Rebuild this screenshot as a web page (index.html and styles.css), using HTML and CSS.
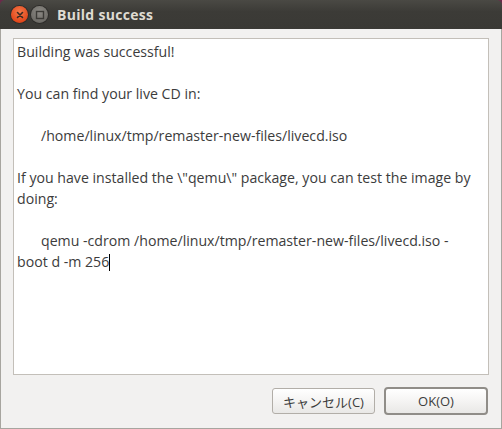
FILE: index.html
```html
<!DOCTYPE html>
<html>
<head>
<meta charset="utf-8">
<link rel="stylesheet" href="styles.css">
</head>
<body>
<div class="window">
  <div class="titlebar">
    <div class="winbtn close">
      <svg width="16" height="16" viewBox="0 0 16 16"><path d="M5.5 5.5 L10.5 10.5 M10.5 5.5 L5.5 10.5" stroke="#3a2a22" stroke-width="1.6" stroke-linecap="round"/></svg>
    </div>
    <div class="winbtn max">
      <svg width="16" height="16" viewBox="0 0 16 16"><rect x="4.5" y="4.5" width="7" height="7" fill="none" stroke="#3c3b37" stroke-width="1.4"/></svg>
    </div>
    <div class="title">Build success</div>
  </div>
  <div class="body">
    <div class="textview">
      <p>Building was successful!</p>
      <p class="blank"></p>
      <p>You can find your live CD in:</p>
      <p class="blank"></p>
      <p class="indent">/home/linux/tmp/remaster-new-files/livecd.iso</p>
      <p class="blank"></p>
      <p>If you have installed the \"qemu\" package, you can test the image by<br>doing:</p>
      <p class="blank"></p>
      <p class="indent">qemu -cdrom /home/linux/tmp/remaster-new-files/livecd.iso -<br>boot d -m 256<span class="cursor"></span></p>
    </div>
    <div class="actions">
      <button class="btn">キャンセル(C)</button>
      <button class="btn default">OK(O)</button>
    </div>
  </div>
</div>
</body>
</html>
```

FILE: styles.css
```css
html, body {
  margin: 0;
  padding: 0;
  background: #6b2a4a;
}
body {
  width: 502px;
  height: 429px;
  overflow: hidden;
  font-family: "Open Sans", "Noto Sans CJK JP", sans-serif;
}
.window {
  width: 502px;
  height: 429px;
  display: flex;
  flex-direction: column;
  border-radius: 5px 5px 0 0;
  overflow: hidden;
  box-sizing: border-box;
}
.titlebar {
  height: 29px;
  flex: none;
  background: linear-gradient(#4a4944, #3c3b37 40%, #3a3935);
  display: flex;
  align-items: center;
  padding-left: 11px;
  box-sizing: border-box;
}
.winbtn {
  width: 17px;
  height: 17px;
  border-radius: 50%;
  display: flex;
  align-items: center;
  justify-content: center;
  margin-right: 3px;
}
.close {
  background: radial-gradient(circle at 50% 35%, #f47a4a, #e2481c 70%, #c23a12);
  box-shadow: 0 0 0 1px #2e2d2a;
}
.max {
  background: radial-gradient(circle at 50% 35%, #8b8984, #6f6d68 70%, #5e5c58);
  box-shadow: 0 0 0 1px #2e2d2a;
}
.title {
  margin-left: 6px;
  color: #dfdbd2;
  font-weight: bold;
  font-size: 14px;
  font-family: "Open Sans", sans-serif;
  letter-spacing: 0.3px;
}
.body {
  flex: 1;
  background: #f2f1f0;
  border-left: 1px solid #a7a59f;
  border-right: 1px solid #a7a59f;
  border-bottom: 1px solid #a7a59f;
  padding: 9px 12px 0 12px;
  display: flex;
  flex-direction: column;
}
.textview {
  height: 337px;
  background: #ffffff;
  border: 1px solid #c3bfb9;
  box-sizing: border-box;
  padding: 2px 3px;
  color: #3c3c3c;
  font-size: 14.15px;
  line-height: 21px;
  white-space: nowrap;
  overflow: hidden;
}
.textview p {
  margin: 0;
  min-height: 21px;
}
.textview .indent {
  text-indent: 24px;
}
.cursor {
  display: inline-block;
  width: 1px;
  height: 17px;
  background: #000;
  vertical-align: -4px;
}
.actions {
  display: flex;
  justify-content: flex-end;
  gap: 9px;
  padding-top: 13px;
  padding-right: 1px;
}
.btn {
  font-family: "Open Sans", "Noto Sans CJK JP", sans-serif;
  font-size: 13px;
  color: #3c3c3c;
  height: 26px;
  width: 103px;
  border: 1px solid #b2aea8;
  border-radius: 3px;
  background: linear-gradient(#ffffff, #f5f4f3 50%, #e9e8e6);
  padding: 0;
}
.btn.default {
  width: 104px;
  height: 28px;
  margin-top: -1px;
  border: 2px solid #908d88;
  border-radius: 4px;
}
```
